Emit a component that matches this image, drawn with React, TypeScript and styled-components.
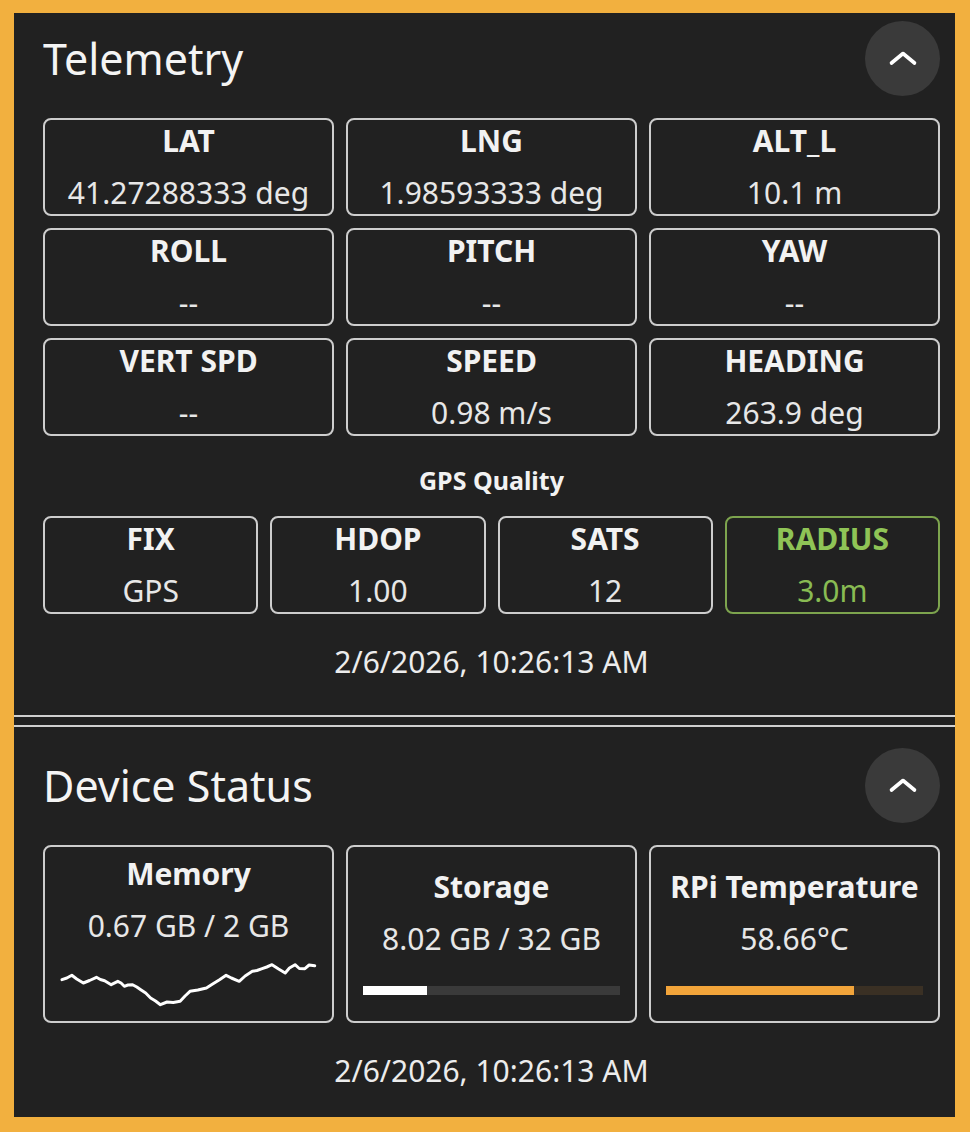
import styled, { createGlobalStyle } from "styled-components";

const GlobalStyle = createGlobalStyle`
  html, body {
    margin: 0;
    padding: 0;
    background: #f2b03f;
  }
  * {
    box-sizing: border-box;
  }
`;

const Frame = styled.div`
  min-height: 1132px;
  padding: 13px 15px 16px 14px;
  background: #f2b03f;
  font-family: "Noto Sans", "Open Sans", sans-serif;
  color: #f2f2f2;
`;

const Panel = styled.main`
  display: flex;
  flex-direction: column;
  gap: 8px;
  background: #212121;
`;

const Section = styled.section<{ $divider: "top" | "bottom" }>`
  padding: ${(p) => (p.$divider === "bottom" ? "7px 15px 32px 29px" : "20px 15px 25px 29px")};
  border-${(p) => p.$divider}: 2px solid #cfcfcf;
`;

const Header = styled.header`
  display: flex;
  align-items: center;
  justify-content: space-between;
  height: 76px;
  margin-bottom: 22px;
`;

const Title = styled.h2`
  margin: 0;
  font-size: 43px;
  font-weight: 400;
  line-height: 1;
  color: #f4f4f4;
`;

const CollapseButton = styled.button`
  display: flex;
  align-items: center;
  justify-content: center;
  width: 75px;
  height: 75px;
  padding: 0;
  border: none;
  border-radius: 50%;
  background: #3a3a3a;
  cursor: pointer;
`;

const Grid = styled.div<{ $cols: number }>`
  display: grid;
  grid-template-columns: repeat(${(p) => p.$cols}, 1fr);
  gap: 12px;
`;

const Card = styled.div<{ $accent?: string }>`
  display: flex;
  flex-direction: column;
  align-items: center;
  justify-content: center;
  height: 98px;
  padding: 0 15px;
  border: 2px solid ${(p) => p.$accent ?? "#cdcdcd"};
  border-radius: 8px;
  color: ${(p) => (p.$accent ? "#8fc456" : "#f2f2f2")};
`;

const DeviceCard = styled(Card)`
  height: 178px;
  padding-bottom: 8px;
`;

const Label = styled.div`
  font-size: 30px;
  font-weight: 700;
  line-height: 42px;
  white-space: nowrap;
`;

const Value = styled.div`
  margin-top: 10px;
  font-size: 30px;
  line-height: 42px;
  white-space: nowrap;
  opacity: 0.95;
`;

const SubTitle = styled.div`
  margin: 29px 0 20px;
  font-size: 25px;
  font-weight: 700;
  line-height: 31px;
  text-align: center;
`;

const Stamp = styled.div`
  margin-top: 27px;
  font-size: 30px;
  line-height: 42px;
  text-align: center;
  color: #ececec;
`;

const Track = styled.div<{ $bg: string }>`
  width: 100%;
  height: 9px;
  margin-top: 26px;
  background: ${(p) => p.$bg};
`;

const Fill = styled.div<{ $color: string }>`
  height: 100%;
  background: ${(p) => p.$color};
`;

const Spark = styled.svg`
  display: block;
  width: 100%;
  height: 46px;
  margin-top: 14px;
`;

const Chevron = () => (
  <svg width="32" height="18" viewBox="0 0 32 18">
    <polyline
      points="4.5,14 16,4.5 27.5,14"
      fill="none"
      stroke="#ffffff"
      strokeWidth="3.6"
      strokeLinecap="round"
      strokeLinejoin="round"
    />
  </svg>
);

const telemetry = [
  { label: "LAT", value: "41.27288333 deg" },
  { label: "LNG", value: "1.98593333 deg" },
  { label: "ALT_L", value: "10.1 m" },
  { label: "ROLL", value: "--" },
  { label: "PITCH", value: "--" },
  { label: "YAW", value: "--" },
  { label: "VERT SPD", value: "--" },
  { label: "SPEED", value: "0.98 m/s" },
  { label: "HEADING", value: "263.9 deg" },
];

const gps = [
  { label: "FIX", value: "GPS" },
  { label: "HDOP", value: "1.00" },
  { label: "SATS", value: "12" },
  { label: "RADIUS", value: "3.0m", accent: "#7da44e" },
];

const memoryHistory = [
  [0, 16.7], [5, 15], [10, 12.3], [15, 16], [21.7, 20], [28, 17.5], [35, 14.3], [39, 16.5],
  [43.3, 17.7], [50, 21.7], [56.7, 18.3], [60, 20], [63.3, 23.3], [67, 22], [71.7, 21.7],
  [76, 24], [80, 26.7], [85, 30], [90, 35], [95, 38], [100, 41.7], [106.7, 39], [113, 39.5],
  [120, 38.3], [125, 33], [130, 28.3], [138, 27], [146.7, 25], [153, 21], [160, 16.7],
  [166.7, 12.3], [172, 15], [180, 18.3], [186, 13], [193.3, 8.3], [198, 7.5], [203.3, 5.7],
  [208, 4], [213.3, 1.7], [220, 6], [226.7, 10], [231, 5], [236.7, 1.7], [241, 5.5],
  [246.7, 5.7], [251, 2], [256.7, 2.7],
];

const storage = { used: 8.02, total: 32 };
const temp = { value: 58.66, max: 80 };

export default function App() {
  return (
    <Frame>
      <GlobalStyle />
      <Panel>
        <Section $divider="bottom">
          <Header>
            <Title>Telemetry</Title>
            <CollapseButton aria-label="Collapse telemetry">
              <Chevron />
            </CollapseButton>
          </Header>
          <Grid $cols={3}>
            {telemetry.map((t) => (
              <Card key={t.label}>
                <Label>{t.label}</Label>
                <Value>{t.value}</Value>
              </Card>
            ))}
          </Grid>
          <SubTitle>GPS Quality</SubTitle>
          <Grid $cols={4}>
            {gps.map((g) => (
              <Card key={g.label} $accent={g.accent}>
                <Label>{g.label}</Label>
                <Value>{g.value}</Value>
              </Card>
            ))}
          </Grid>
          <Stamp>2/6/2026, 10:26:13 AM</Stamp>
        </Section>

        <Section $divider="top">
          <Header>
            <Title>Device Status</Title>
            <CollapseButton aria-label="Collapse device status">
              <Chevron />
            </CollapseButton>
          </Header>
          <Grid $cols={3}>
            <DeviceCard>
              <Label>Memory</Label>
              <Value>0.67 GB / 2 GB</Value>
              <Spark viewBox="-2 -2 261 46" preserveAspectRatio="none">
                <polyline
                  points={memoryHistory.map((p) => p.join(",")).join(" ")}
                  fill="none"
                  stroke="#ffffff"
                  strokeWidth="3"
                  strokeLinejoin="round"
                  strokeLinecap="round"
                />
              </Spark>
            </DeviceCard>
            <DeviceCard>
              <Label>Storage</Label>
              <Value>8.02 GB / 32 GB</Value>
              <Track $bg="#3a3a3a">
                <Fill $color="#ffffff" style={{ width: `${(storage.used / storage.total) * 100}%` }} />
              </Track>
            </DeviceCard>
            <DeviceCard>
              <Label>RPi Temperature</Label>
              <Value>58.66°C</Value>
              <Track $bg="#3a3024">
                <Fill $color="#f2a43a" style={{ width: `${(temp.value / temp.max) * 100}%` }} />
              </Track>
            </DeviceCard>
          </Grid>
          <Stamp>2/6/2026, 10:26:13 AM</Stamp>
        </Section>
      </Panel>
    </Frame>
  );
}
